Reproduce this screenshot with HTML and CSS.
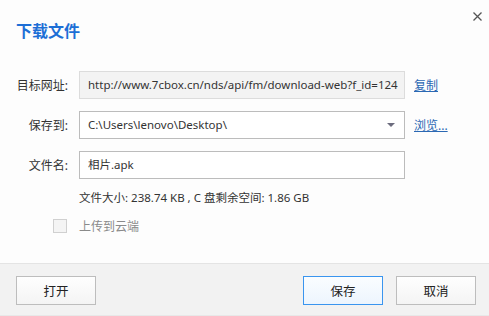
FILE: index.html
```html
<!DOCTYPE html>
<html lang="zh-CN">
<head>
    <meta charset="UTF-8">
    <title>下载文件</title>
    <link rel="stylesheet" href="styles.css">
</head>
<body>
    <div class="dialog">
        <!-- Title bar -->
        <div class="header">
            <h1>下载文件</h1>
            <span class="close">
                <svg width="9" height="9" viewBox="0 0 9 9"><path d="M0.5 0.5L8.5 8.5M8.5 0.5L0.5 8.5" stroke="#555" stroke-width="1.3"/></svg>
            </span>
        </div>

        <!-- Form rows -->
        <div class="form">
            <label class="label">目标网址:</label>
            <div class="field readonly">http://www.7cbox.cn/nds/api/fm/download-web?f_id=124</div>
            <a class="link" href="#">复制</a>

            <label class="label">保存到:</label>
            <div class="field select">
                <span>C:\Users\lenovo\Desktop\</span>
                <span class="arrow"></span>
            </div>
            <a class="link" href="#">浏览...</a>

            <label class="label">文件名:</label>
            <div class="field">相片.apk</div>
            <span></span>
        </div>

        <div class="info">文件大小: 238.74 KB , C 盘剩余空间: 1.86 GB</div>

        <div class="upload">
            <span class="checkbox"></span>
            <span class="upload-text">上传到云端</span>
        </div>

        <!-- Footer buttons -->
        <div class="footer">
            <button class="btn">打开</button>
            <div class="spacer"></div>
            <button class="btn primary">保存</button>
            <button class="btn">取消</button>
        </div>
    </div>
</body>
</html>
```

FILE: styles.css
```css
/* Page */
body {
    margin: 0;
    padding: 0;
    background-color: #fdfdfd;
    font-family: "Noto Sans", "Noto Sans CJK SC", sans-serif;
    font-size: 12px;
    color: #333;
}

.dialog {
    width: 489px;
    height: 316px;
    display: flex;
    flex-direction: column;
    box-sizing: border-box;
}

/* Title bar */
.header {
    height: 60px;
    display: flex;
    justify-content: space-between;
    align-items: flex-start;
    padding: 0 7px 0 16px;
}

.header h1 {
    margin: 21px 0 0 0;
    font-size: 16px;
    line-height: 18px;
    font-weight: bold;
    color: #1d6fd6;
    font-family: "Noto Sans CJK SC", sans-serif;
}

.close {
    margin-top: 12px;
    display: block;
    line-height: 0;
}

/* Form grid */
.form {
    margin-top: 11px;
    display: grid;
    grid-template-columns: 69px 326px auto;
    column-gap: 10px;
    row-gap: 12px;
    align-items: center;
}

.label {
    text-align: right;
    color: #333;
    padding-right: 1px;
}

.field {
    height: 28px;
    box-sizing: border-box;
    border: 1px solid #bcbcbc;
    background: #fff;
    padding: 0 8px;
    line-height: 26px;
    font-size: 11.5px;
    white-space: nowrap;
    overflow: hidden;
}

.field.readonly {
    background: #f3f3f3;
    border-color: #dcdcdc;
}

.field.select {
    display: flex;
    justify-content: space-between;
    align-items: center;
}

.arrow {
    width: 0;
    height: 0;
    border-left: 4px solid transparent;
    border-right: 4px solid transparent;
    border-top: 4px solid #6c6c7e;
    margin-right: 1px;
}

.link {
    color: #2b68b3;
    text-decoration: underline;
    margin-left: -1px;
}

/* Info and checkbox */
.info {
    margin: 11px 0 0 79px;
    line-height: 16px;
    font-size: 11.5px;
}

.upload {
    display: flex;
    align-items: center;
    margin: 11px 0 0 53px;
}

.checkbox {
    width: 12px;
    height: 12px;
    border: 1px solid #d0d0d0;
    background: #f4f4f4;
}

.upload-text {
    margin-left: 12px;
    color: #8a8a8a;
}

/* Footer */
.footer {
    margin-top: auto;
    height: 53px;
    background: #f2f2f2;
    border-top: 1px solid #e4e4e4;
    border-bottom: 1px solid #e8e8e8;
    display: flex;
    align-items: flex-start;
    padding: 12px 13px 0 16px;
    box-sizing: border-box;
    gap: 13px;
}

.spacer {
    flex: 1;
}

.btn {
    width: 80px;
    height: 29px;
    border: 1px solid #bdbdbd;
    background: linear-gradient(#fefefe, #f4f4f4);
    font-family: "Noto Sans CJK SC", sans-serif;
    font-size: 12.5px;
    color: #222;
    padding: 0;
}

.btn.primary {
    border-color: #3a95ef;
    background: linear-gradient(#fafdff, #edf5fe);
}
```
